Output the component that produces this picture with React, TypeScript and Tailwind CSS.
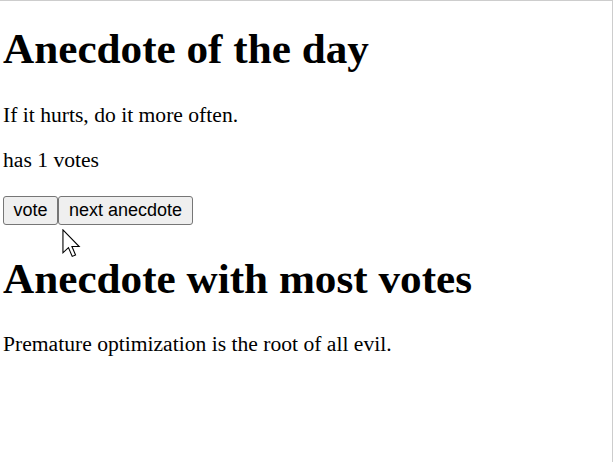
export default function App() {
  return (
    <div className="relative w-[613px] h-[462px] border-t border-r border-[#cdcdcd] bg-white pl-[3px] pt-[23px] text-black font-['Liberation_Serif',serif]">
      <h1 className="text-[43.2px] font-bold leading-[50px]">Anecdote of the day</h1>
      <p className="mt-[29px] text-[21.6px] leading-[25px]">If it hurts, do it more often.</p>
      <p className="mt-[20px] text-[21.6px] leading-[25px]">has 1 votes</p>
      <div className="mt-[23px] flex font-['Liberation_Sans',Arial,sans-serif] text-[18px] leading-[normal]">
        <button className="flex h-[29px] w-[55px] items-center justify-center rounded-[3px] border border-[#767676] bg-[#efefef]">
          vote
        </button>
        <button className="flex h-[29px] w-[135px] items-center justify-center rounded-[3px] border border-[#767676] bg-[#efefef]">
          next anecdote
        </button>
      </div>
      <h1 className="mt-[29px] text-[43.2px] font-bold leading-[50px]">Anecdote with most votes</h1>
      <p className="mt-[28px] text-[21.6px] leading-[25px]">Premature optimization is the root of all evil.</p>

      {/* mouse pointer from the screenshot */}
      <svg
        className="pointer-events-none absolute left-[62px] top-[228px]"
        width="19"
        height="29"
        viewBox="0 0 13 20"
      >
        <path
          d="M0.6 0.6 L0.6 16.4 L4.4 12.8 L7 18.9 L9.3 17.9 L6.8 12.1 L11.8 12.1 Z"
          fill="#fff"
          stroke="#000"
          strokeWidth="0.75"
          strokeLinejoin="miter"
        />
      </svg>
    </div>
  );
}
